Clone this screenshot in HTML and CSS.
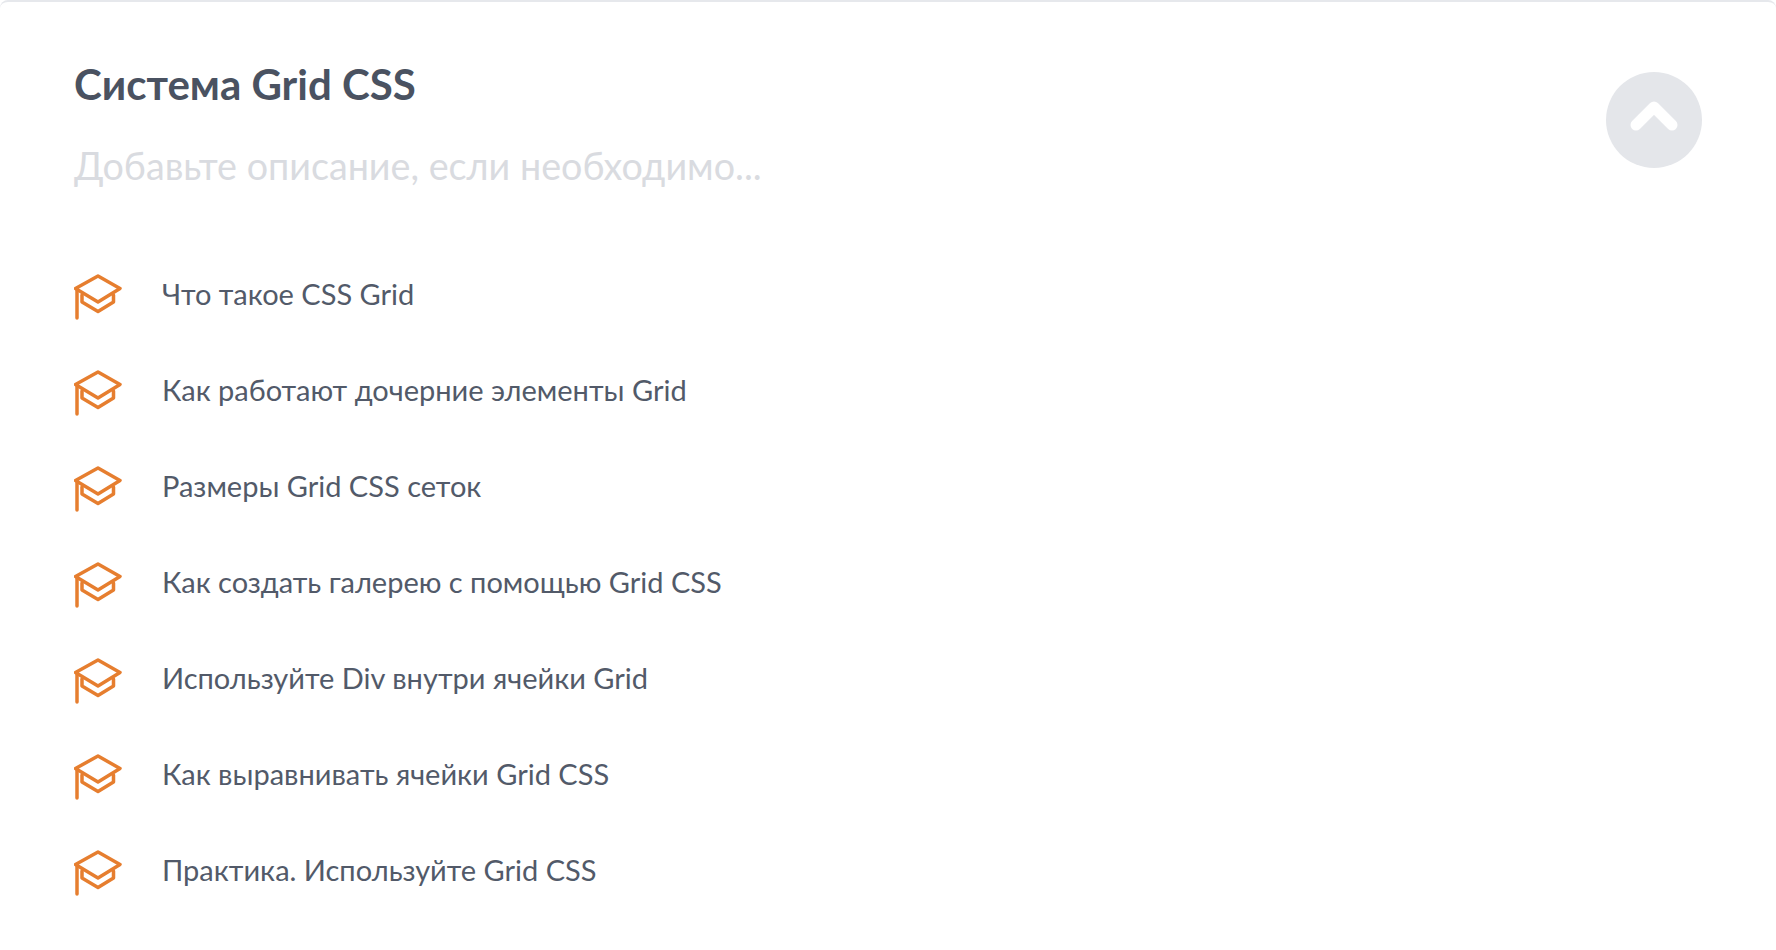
FILE: index.html
```html
<!DOCTYPE html>
<html lang="en">
<head>
    <meta charset="UTF-8">
    <title>Система Grid CSS</title>
    <link rel="stylesheet" href="styles.css">
</head>
<body>
    <svg class="sprite" width="0" height="0">
        <symbol id="cap" viewBox="0 0 48 46">
            <path d="M1.5 14.5 L24 2 L46 14.5 L24 28 Z"/>
            <path d="M8 21 V28 L24 37.5 L39.5 28 V21"/>
            <path d="M3 14.5 V44"/>
        </symbol>
    </svg>
    <div class="card">
        <div class="head">
            <div class="head-text">
                <h1>Система Grid CSS</h1>
                <p class="desc">Добавьте описание, если необходимо...</p>
            </div>
            <button class="toggle">
                <svg viewBox="0 0 96 96" width="96" height="96"><path d="M30 53 L48 35 L66 53"/></svg>
            </button>
        </div>
        <ul class="lessons">
            <li><svg class="cap"><use href="#cap"/></svg>Что такое CSS Grid</li>
            <li><svg class="cap"><use href="#cap"/></svg>Как работают дочерние элементы Grid</li>
            <li><svg class="cap"><use href="#cap"/></svg>Размеры Grid CSS сеток</li>
            <li><svg class="cap"><use href="#cap"/></svg>Как создать галерею с помощью Grid CSS</li>
            <li><svg class="cap"><use href="#cap"/></svg>Используйте Div внутри ячейки Grid</li>
            <li><svg class="cap"><use href="#cap"/></svg>Как выравнивать ячейки Grid CSS</li>
            <li><svg class="cap"><use href="#cap"/></svg>Практика. Используйте Grid CSS</li>
        </ul>
    </div>
</body>
</html>
```
FILE: styles.css
```css
body {
    margin: 0;
    height: 950px;
    overflow: hidden;
    background: #fff;
    font-family: Lato, "Open Sans", sans-serif;
    color: #4a5261;
}
.sprite {
    display: block;
}
.card {
    border-top: 2px solid #e6e8ec;
    border-radius: 8px 8px 0 0;
    padding: 59px 74px 0;
}
.head {
    display: flex;
    justify-content: space-between;
    align-items: flex-start;
}
h1 {
    margin: 0;
    font-size: 42px;
    line-height: 46px;
    font-weight: 700;
}
.desc {
    margin: 36px 0 0;
    font-size: 37.7px;
    line-height: 46px;
    color: #d9dbe0;
}
.toggle {
    width: 96px;
    height: 96px;
    margin-top: 11px;
    padding: 0;
    border: none;
    border-radius: 50%;
    background: #e4e6ea;
}
.toggle svg {
    display: block;
}
.toggle path {
    fill: none;
    stroke: #fff;
    stroke-width: 11;
    stroke-linecap: round;
    stroke-linejoin: round;
}
.lessons {
    list-style: none;
    margin: 56px 0 0;
    padding: 0;
}
.lessons li {
    display: flex;
    align-items: center;
    gap: 40px;
    height: 96px;
    font-size: 29px;
    color: #525a69;
}
.cap {
    width: 48px;
    height: 46px;
    flex: none;
    margin-top: 8px;
    fill: none;
    stroke: #e67e2f;
    stroke-width: 3.5;
    stroke-linecap: round;
    stroke-linejoin: round;
}
```
